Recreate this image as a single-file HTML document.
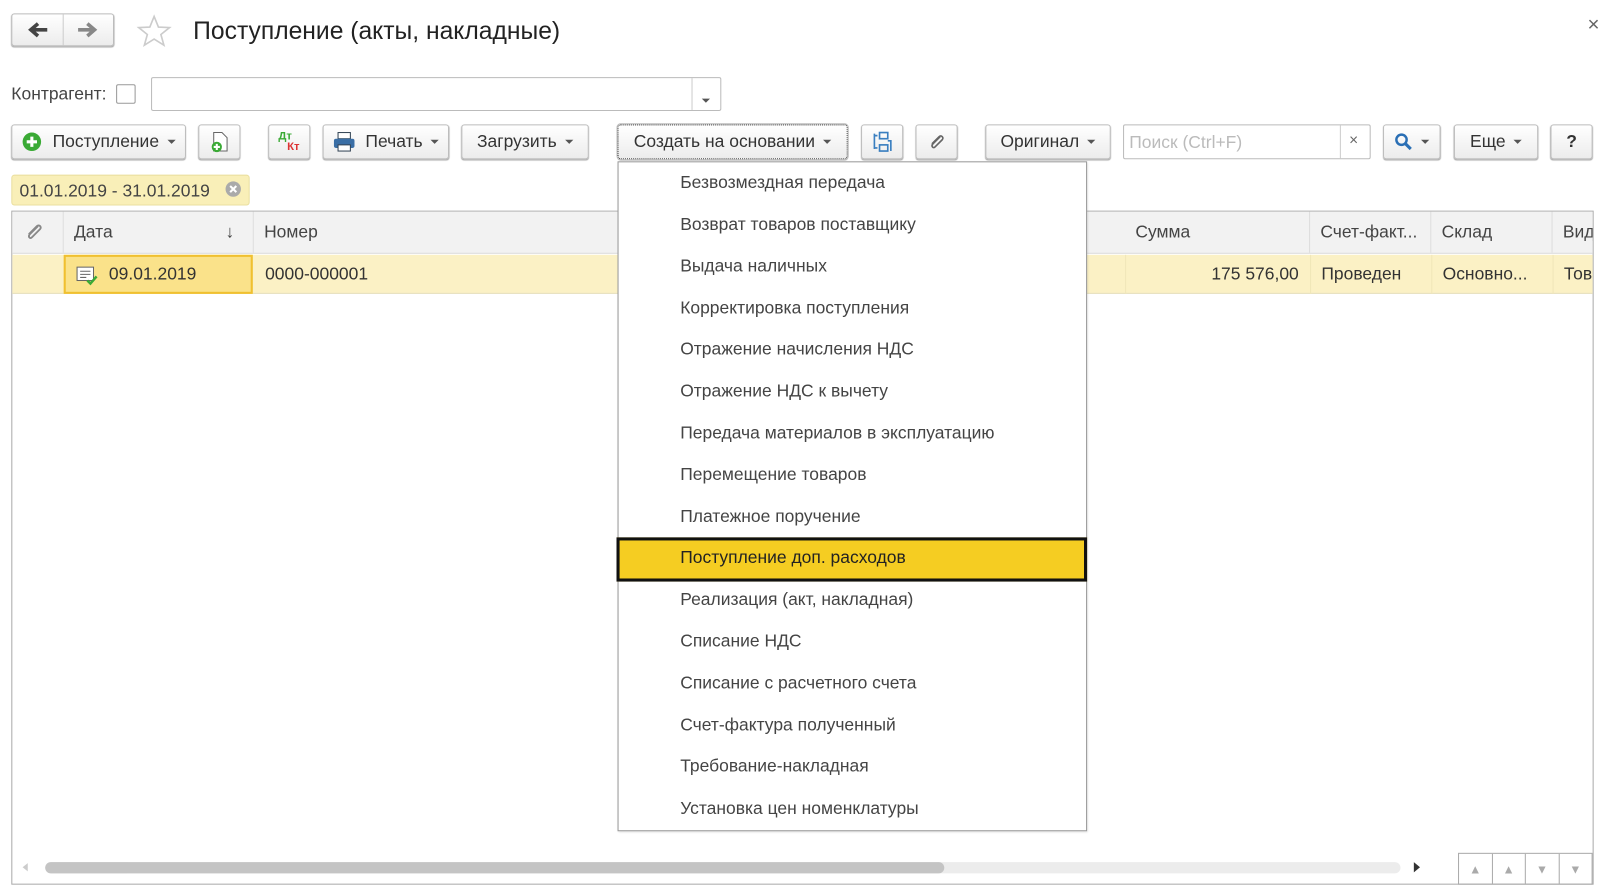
<!DOCTYPE html>
<html><head><meta charset="utf-8"><style>
*{box-sizing:border-box;margin:0;padding:0}
html,body{width:1610px;height:893px;overflow:hidden;background:#fff}
#w{position:absolute;left:0;top:0;width:1567px;height:869px;transform:scale(1.0275);transform-origin:0 0;font-family:"Liberation Sans",Arial,sans-serif;color:#333;font-size:17px}
.a{position:absolute}
.btn{position:absolute;top:121px;height:34px;border:1px solid #bdbdbd;border-radius:3px;background:linear-gradient(#fff,#ececec);box-shadow:0 1px 1px #aaa;display:flex;align-items:center;justify-content:center;color:#333;font-size:17px;white-space:nowrap}
.dd{display:inline-block;width:0;height:0;border-left:4px solid transparent;border-right:4px solid transparent;border-top:4px solid #555;margin-left:8px;vertical-align:middle}
.mi{position:absolute;left:60px;font-size:17px;color:#444}
.th{position:absolute;top:206px;height:40px;line-height:40px;border-right:1px solid #ddd;padding-left:10px;color:#444}
.td{position:absolute;top:248px;height:38px;line-height:38px;color:#333}
</style></head><body><div id="w">
<div class="a" style="left:11px;top:13px;width:100px;height:32px;border:1px solid #bbb;border-radius:3px;background:linear-gradient(#fff,#ececec);box-shadow:0 1px 1px #aaa"></div>
<div class="a" style="left:61px;top:14px;width:1px;height:30px;background:#ccc"></div>
<svg class="a" style="left:26px;top:20px" width="22" height="18"><path d="M20 9H5M11 3L4 9L11 15" stroke="#444" stroke-width="3.5" fill="none"/></svg>
<svg class="a" style="left:74px;top:20px" width="22" height="18"><path d="M2 9H17M11 3L18 9L11 15" stroke="#888" stroke-width="3.5" fill="none"/></svg>
<svg class="a" style="left:133px;top:14px" width="34" height="32"><path d="M17 2L21.2 12.3 32 12.8 23.6 19.6 26.5 30 17 24 7.5 30 10.4 19.6 2 12.8 12.8 12.3Z" fill="none" stroke="#ccc" stroke-width="1.6"/></svg>
<div class="a" style="left:188px;top:17px;font-size:24px;color:#222">Поступление (акты, накладные)</div>
<div class="a" style="left:1545px;top:13px;font-size:20px;color:#666">×</div>
<div class="a" style="left:11px;top:82px;color:#444">Контрагент:</div>
<div class="a" style="left:113px;top:82px;width:19px;height:19px;border:1px solid #999;border-radius:2px"></div>
<div class="a" style="left:147px;top:75px;width:555px;height:33px;border:1px solid #bbb;border-radius:2px"></div>
<div class="a" style="left:673px;top:76px;width:1px;height:31px;background:#ccc"></div>
<div class="a" style="left:683px;top:87px"><span class="dd" style="margin:0"></span></div>
<div class="btn" style="left:11px;width:170px"><svg width="20" height="20" style="margin-right:10px"><circle cx="10" cy="10" r="9" fill="#3aaa35"/><path d="M10 5V15M5 10H15" stroke="#fff" stroke-width="3"/></svg>Поступление<span class="dd"></span></div>
<div class="btn" style="left:193px;width:41px"><svg width="20" height="22"><path d="M4 2H12L17 7V20H4Z" fill="#fff" stroke="#666"/><circle cx="7" cy="16" r="5" fill="#3aaa35"/><path d="M7 13V19M4 16H10" stroke="#fff" stroke-width="2"/></svg></div>
<div class="btn" style="left:261px;width:41px;flex-direction:column;line-height:10px;font-size:11px;font-weight:bold"><span style="color:#3aaa35;margin-left:-8px">Дт</span><span style="color:#d33;margin-left:8px">Кт</span></div>
<div class="btn" style="left:314px;width:123px"><svg width="22" height="20" style="margin-right:10px"><rect x="5" y="1" width="12" height="6" fill="#fff" stroke="#345"/><rect x="1" y="7" width="20" height="9" rx="2" fill="#3a6ea5"/><rect x="5" y="13" width="12" height="6" fill="#fff" stroke="#345"/></svg>Печать<span class="dd"></span></div>
<div class="btn" style="left:449px;width:124px">Загрузить<span class="dd"></span></div>
<div class="btn" style="left:601px;width:224px;border:1px dotted #333;outline:1px solid #bbb">Создать на основании<span class="dd"></span></div>
<div class="btn" style="left:838px;width:41px"><svg width="20" height="22"><rect x="7" y="2" width="8" height="6" fill="none" stroke="#3a7fc0" stroke-width="1.6"/><rect x="7" y="14" width="8" height="6" fill="none" stroke="#3a7fc0" stroke-width="1.6"/><path d="M2 3V18M2 5H5M2 17H5M15 10H18V20" stroke="#3a7fc0" stroke-width="1.6" fill="none"/></svg></div>
<div class="btn" style="left:891px;width:41px"><svg width="18" height="20"><path d="M12 5L5 12C3 14 5 17 7 15L14 8C16 6 13 3 11 5L4 12" stroke="#666" stroke-width="1.6" fill="none"/></svg></div>
<div class="btn" style="left:959px;width:122px">Оригинал<span class="dd"></span></div>
<div class="a" style="left:1093px;top:121px;width:241px;height:34px;border:1px solid #bbb;border-radius:2px"></div>
<div class="a" style="left:1099px;top:129px;color:#bbb">Поиск (Ctrl+F)</div>
<div class="a" style="left:1304px;top:122px;width:1px;height:32px;background:#ccc"></div>
<div class="a" style="left:1313px;top:128px;color:#666;font-size:15px">×</div>
<div class="btn" style="left:1346px;width:56px"><svg width="18" height="18"><circle cx="7" cy="7" r="5" fill="none" stroke="#2a6fb5" stroke-width="2.4"/><path d="M11 11L16 16" stroke="#2a6fb5" stroke-width="3"/></svg><span class="dd"></span></div>
<div class="btn" style="left:1415px;width:82px">Еще<span class="dd"></span></div>
<div class="btn" style="left:1509px;width:41px;font-weight:bold">?</div>
<div class="a" style="left:11px;top:170px;width:232px;height:30px;background:#f9efb8;border:1px solid #eadf9f;border-radius:3px"></div>
<div class="a" style="left:19px;top:176px;color:#444">01.01.2019 - 31.01.2019</div>
<svg class="a" style="left:219px;top:176px" width="16" height="16"><circle cx="8" cy="8" r="7.5" fill="#aaa"/><path d="M5 5L11 11M11 5L5 11" stroke="#fff" stroke-width="2"/></svg>
<div class="a" style="left:11px;top:205px;width:1540px;height:656px;border:1px solid #aaa"></div>
<div class="a" style="left:12px;top:206px;width:1538px;height:41px;background:#f2f2f2;border-bottom:1px solid #ddd"></div>
<div class="th" style="left:12px;width:50px"><svg width="20" height="20" style="margin-top:10px;margin-left:2px"><path d="M13 4L5 12C3 14 5 17 7 15L15 7C17 5 14 2 12 4L4 12" stroke="#888" stroke-width="1.8" fill="none"/></svg></div>
<div class="th" style="left:62px;width:185px">Дата<span style="position:absolute;right:18px">↓</span></div>
<div class="th" style="left:247px;width:360px">Номер</div>
<div class="th" style="left:1095px;width:180px">Сумма</div>
<div class="th" style="left:1275px;width:118px">Счет-факт...</div>
<div class="th" style="left:1393px;width:118px">Склад</div>
<div class="th" style="left:1511px;width:39px;border:0;overflow:hidden">Вид</div>
<div class="a" style="left:12px;top:248px;width:1538px;height:38px;background:#fbf1c5;border-bottom:1px solid #e6e0c0"></div>
<div class="a" style="left:1095px;top:248px;width:1px;height:38px;background:#f0e6b8"></div>
<div class="a" style="left:1275px;top:248px;width:1px;height:38px;background:#f0e6b8"></div>
<div class="a" style="left:1393px;top:248px;width:1px;height:38px;background:#f0e6b8"></div>
<div class="a" style="left:1511px;top:248px;width:1px;height:38px;background:#f0e6b8"></div>
<div class="a" style="left:62px;top:248px;width:184px;height:38px;background:#fae28a;border:2px solid #f0c030"></div>
<svg class="a" style="left:74px;top:258px" width="22" height="20"><rect x="1" y="2" width="16" height="13" fill="#fff" stroke="#666"/><path d="M4 6H14M4 9H14M4 12H10" stroke="#666"/><path d="M11 15L14 18L20 11" stroke="#3aaa35" stroke-width="2.4" fill="none"/></svg>
<div class="td" style="left:106px">09.01.2019</div>
<div class="td" style="left:258px">0000-000001</div>
<div class="td" style="left:1095px;width:180px;text-align:right;padding-right:11px">175 576,00</div>
<div class="td" style="left:1286px">Проведен</div>
<div class="td" style="left:1404px">Основно...</div>
<div class="td" style="left:1522px;width:28px;overflow:hidden">Тов</div>
<div class="a" style="left:22px;top:840px;width:0;height:0;border-top:4px solid transparent;border-bottom:4px solid transparent;border-right:5px solid #ccc"></div>
<div class="a" style="left:44px;top:839px;width:1319px;height:11px;background:#ececec;border-radius:6px"></div>
<div class="a" style="left:44px;top:839px;width:875px;height:11px;background:#c4c4c4;border-radius:6px"></div>
<div class="a" style="left:1376px;top:839px;width:0;height:0;border-top:5px solid transparent;border-bottom:5px solid transparent;border-left:6px solid #333"></div>
<div class="a" style="left:1419px;top:830px;width:131px;height:31px;border:1px solid #aaa;display:flex">
<div style="flex:1;border-right:1px solid #aaa;text-align:center;color:#aaa;font-size:12px;line-height:30px">▲</div>
<div style="flex:1;border-right:1px solid #aaa;text-align:center;color:#aaa;font-size:12px;line-height:30px">▲</div>
<div style="flex:1;border-right:1px solid #aaa;text-align:center;color:#aaa;font-size:12px;line-height:30px">▼</div>
<div style="flex:1;text-align:center;color:#aaa;font-size:12px;line-height:30px">▼</div></div>
<div class="a" style="left:601px;top:157px;width:457px;height:652px;background:#fff;border:1px solid #999;box-shadow:1px 1px 2px rgba(0,0,0,.15)">
<div class="mi" style="top:10px">Безвозмездная передача</div>
<div class="mi" style="top:51px">Возврат товаров поставщику</div>
<div class="mi" style="top:91px">Выдача наличных</div>
<div class="mi" style="top:132px">Корректировка поступления</div>
<div class="mi" style="top:172px">Отражение начисления НДС</div>
<div class="mi" style="top:213px">Отражение НДС к вычету</div>
<div class="mi" style="top:254px">Передача материалов в эксплуатацию</div>
<div class="mi" style="top:294px">Перемещение товаров</div>
<div class="mi" style="top:335px">Платежное поручение</div>
<div class="a" style="left:-2px;top:365px;width:458px;height:43px;background:#f5cd22;border:3px solid #111"></div>
<div class="mi" style="top:375px;color:#222">Поступление доп. расходов</div>
<div class="mi" style="top:416px">Реализация (акт, накладная)</div>
<div class="mi" style="top:456px">Списание НДС</div>
<div class="mi" style="top:497px">Списание с расчетного счета</div>
<div class="mi" style="top:538px">Счет-фактура полученный</div>
<div class="mi" style="top:578px">Требование-накладная</div>
<div class="mi" style="top:619px">Установка цен номенклатуры</div>
</div>
</div></body></html>
